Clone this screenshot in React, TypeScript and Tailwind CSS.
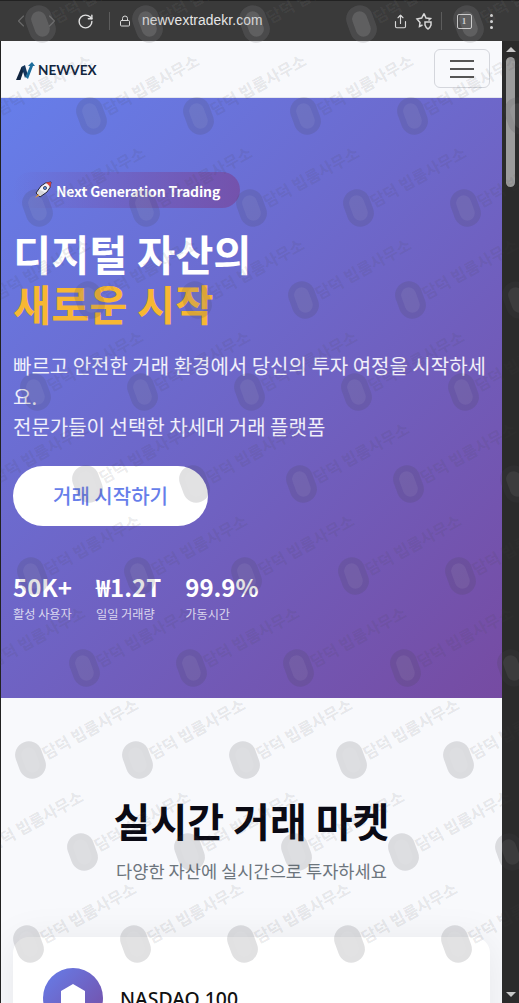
import React from "react";
import { ChevronLeft, ChevronRight, Lock, RotateCw, Share } from "lucide-react";

const KR = "font-['Noto_Sans_CJK_KR','Noto_Sans',sans-serif]";

const stats = [
  { value: "50K+", label: "활성 사용자" },
  { value: "₩1.2T", label: "일일 거래량" },
  { value: "99.9%", label: "가동시간" },
];

// watermark rows: pitch taken from the reference
const marks: { x: number; y: number }[] = [];
for (let r = -8; r <= 2; r++) {
  const even = r % 2 === 0;
  const x0 = (even ? 30 : -24) - r * 1.2;
  for (let i = 0; i < 6; i++) {
    marks.push({ x: x0 + i * 107, y: 760 + r * 92 });
  }
}

const Watermark = ({ x, y, light }: { x: number; y: number; light?: boolean }) => {
  return (
    <div className="absolute w-0 h-0" style={{ left: x, top: y }}>
      <div
        className={
          light
            ? "absolute left-[-13px] top-[-19px] w-[27px] h-[38px] rounded-full bg-[#ffffff14] -rotate-[20deg]"
            : "absolute left-[-13px] top-[-19px] w-[27px] h-[38px] rounded-full bg-[#45454a29] -rotate-[20deg]"
        }
      >
        <div className="absolute inset-[6px] rounded-full bg-[#ffffff10]"></div>
      </div>
      <div
        className={
          light
            ? "absolute left-[13px] top-[-16px] origin-left -rotate-[29deg] whitespace-nowrap text-[16px] leading-[20px] font-bold text-[#ffffff0c]"
            : "absolute left-[13px] top-[-16px] origin-left -rotate-[29deg] whitespace-nowrap text-[16px] leading-[20px] font-bold text-[#45454a1e]"
        }
      >
        담덕 빕룸사무소
      </div>
    </div>
  );
};

const App = () => {
  return (
    <div className={`relative w-[519px] h-[1003px] overflow-hidden bg-[#2b2b2b] ${KR}`}>
      {/* browser bar */}
      <div className="relative h-[41px] bg-[#3a3a3a] border-t border-[#222] flex items-center text-[#d8d8d8]">
        <ChevronLeft size={20} strokeWidth={1.3} className="ml-[11px] text-[#6a6a6a]" />
        <ChevronRight size={20} strokeWidth={1.3} className="ml-[11px] text-[#6a6a6a]" />
        <RotateCw size={17} strokeWidth={2} className="ml-[15px] text-[#e0e0e0]" />
        <div className="ml-[15px] w-px h-[18px] bg-[#5c5c5c]"></div>
        <Lock size={12} strokeWidth={2} className="ml-[9px]" />
        <span className="ml-[11px] text-[13.8px] tracking-[0.1px] font-['Liberation_Sans',sans-serif] text-[#e6e6e6]">
          newvextradekr.com
        </span>
        <Share size={15} strokeWidth={1.8} className="ml-[130px]" />
        <svg width="18" height="18" viewBox="0 0 18 18" fill="none" stroke="#d8d8d8" strokeWidth="1.5" className="ml-[7px]">
          <path d="M9 1.5 L11 6 L15.5 6.5 L13.5 8.5 M7.5 13 L4.5 14.5 L5 10.5 L2 7 L6.7 6 L9 1.5" />
          <path d="M10 10 L16 10 L16 13 Q15 16 13 17 Q11 16 10 13 Z" />
        </svg>
        <div className="ml-[8px] w-px h-[18px] bg-[#5c5c5c]"></div>
        <div className="ml-[15px] w-[15px] h-[15px] rounded-[2px] border-[1.5px] border-[#d8d8d8] flex items-center justify-center text-[9px] leading-none font-bold font-['Liberation_Serif',serif]">
          1
        </div>
        <div className="ml-[18px] flex flex-col gap-[3px]">
          <div className="w-[3px] h-[3px] rounded-full bg-[#d8d8d8]"></div>
          <div className="w-[3px] h-[3px] rounded-full bg-[#d8d8d8]"></div>
          <div className="w-[3px] h-[3px] rounded-full bg-[#d8d8d8]"></div>
        </div>
      </div>

      <div className="flex h-[962px]">
        <div className="w-[502px] border-l border-[#222] overflow-hidden bg-[#f8f9fc]">
          {/* nav */}
          <div className="h-[57px] bg-[#f8f9fc] border-b border-[#e4e6ee] flex items-center justify-between pl-[15px] pr-[12px]">
            <div className="flex items-center gap-[3px] pt-[4px]">
              <svg width="19" height="18" viewBox="0 0 19 18">
                <path d="M0 18 L5.5 5 L9 4 L4.5 18 Z" fill="#10253f" />
                <path d="M5.5 5 L9 3 L11.5 12 L9 16 Z" fill="#14365c" />
                <path d="M9.5 15 L14 4 L12 4 L16 0 L19 4 L17 4 L12 17 Z" fill="#1c6d9c" />
              </svg>
              <span className="text-[13.5px] leading-none font-bold text-[#12263f] font-['Lato',sans-serif]">NEWVEX</span>
            </div>
            <button className="w-[56px] h-[39px] mb-[1px] rounded-[6px] border border-[#d4d6dc] flex flex-col items-center justify-center gap-[6px]">
              <span className="w-[24px] h-[2px] bg-[#555]"></span>
              <span className="w-[24px] h-[2px] bg-[#555]"></span>
              <span className="w-[24px] h-[2px] bg-[#555]"></span>
            </button>
          </div>

          {/* hero */}
          <div className="h-[600px] bg-[linear-gradient(135deg,#667eea_0%,#764ba2_100%)] pl-[12px] pt-[74px] text-white">
            <div className="w-[227px] h-[36px] rounded-full bg-[linear-gradient(90deg,#764ba200_0%,#764ba2cc_100%)] flex items-center pl-[21px] gap-[4px]">
              <svg width="18" height="18" viewBox="0 0 18 18">
                <path d="M2 12 L7 5 Q11 1 17 1 Q17 7 13 11 L6 16 Z" fill="#f2f2f6" stroke="#23233a" strokeWidth="1" />
                <path d="M12 1.6 Q15 1 17 1 Q17 3 16.4 6 Z" fill="#d8433f" />
                <circle cx="11" cy="7" r="1.6" fill="#5a8fd8" stroke="#23233a" strokeWidth="0.7" />
                <path d="M1 17 L4 13 L5.5 14.5 Z" fill="#f0a030" />
              </svg>
              <span className="pt-[1px] text-[14px] leading-none font-bold tracking-[-0.15px]">
                Next Generation Trading
              </span>
            </div>

            <h1 className="mt-[20px] text-[41.5px] leading-[50px] font-bold">
              디지털 자산의
              <br />
              <span className="text-[#f7b733]">새로운 시작</span>
            </h1>

            <p className="mt-[23px] text-[20px] leading-[30.6px] text-white/90 pr-[12px]">
              빠르고 안전한 거래 환경에서 당신의 투자 여정을 시작하세요.
              <br />
              전문가들이 선택한 차세대 거래 플랫폼
            </p>

            <button className="mt-[23px] w-[195px] h-[60px] rounded-full bg-white text-[20px] font-medium text-[#667eea] flex items-center justify-center">
              거래 시작하기
            </button>

            <div className="mt-[46px] flex gap-[24px]">
              {stats.map((s) => (
                <div key={s.label}>
                  <div className="text-[24px] leading-[30px] font-bold">{s.value}</div>
                  <div className="mt-[3px] text-[12.2px] leading-[18px] text-white/75">{s.label}</div>
                </div>
              ))}
            </div>
          </div>

          {/* market */}
          <div className="px-[12px] pt-[92px]">
            <h2 className="text-[40px] leading-[60px] font-bold text-center text-[#0a0a14]">실시간 거래 마켓</h2>
            <p className="mt-[8px] text-[17.6px] leading-[26px] text-center text-[#6c757d]">
              다양한 자산에 실시간으로 투자하세요
            </p>
            <div className="mt-[53px] h-[200px] rounded-[16px] bg-white shadow-[0_4px_40px_rgba(0,0,0,0.08)] pl-[30px] pt-[31px] flex items-start gap-[17px]">
              <div className="w-[60px] h-[60px] rounded-full bg-[linear-gradient(135deg,#667eea_0%,#764ba2_100%)] flex items-center justify-center">
                <svg width="26" height="28" viewBox="0 0 26 28">
                  <path d="M13 0 L25 7 L25 21 L13 28 L1 21 L1 7 Z" fill="#fff" />
                </svg>
              </div>
              <div className="pt-[19px] text-[19.4px] leading-[24px] font-medium text-[#111] font-['Noto_Sans',sans-serif]">
                NASDAQ 100
              </div>
            </div>
          </div>
        </div>

        {/* scrollbar */}
        <div className="w-[17px] bg-[#2b2b2b] flex flex-col items-center justify-between py-[6px]">
          <div className="flex flex-col items-center gap-[5px] w-full">
            <div className="w-0 h-0 border-x-[5px] border-x-transparent border-b-[5px] border-b-[#c8c8c8]"></div>
            <div className="w-[9px] h-[130px] rounded-full bg-[#9c9c9c]"></div>
          </div>
          <div className="w-0 h-0 border-x-[5px] border-x-transparent border-t-[5px] border-t-[#c8c8c8]"></div>
        </div>
      </div>

      {/* watermark sits over the whole capture */}
      <div className="absolute inset-0 pointer-events-none overflow-hidden">
        {marks.map((m) => (
          <Watermark key={`${m.x}-${m.y}`} x={m.x} y={m.y} />
        ))}
      </div>
      {/* same marks read lighter on the dark browser bar */}
      <div className="absolute left-0 top-0 w-[519px] h-[41px] pointer-events-none overflow-hidden">
        {marks
          .filter((m) => m.y < 80)
          .map((m) => (
            <Watermark key={`${m.x}-${m.y}`} x={m.x} y={m.y} light />
          ))}
      </div>
    </div>
  );
};

export default App;
